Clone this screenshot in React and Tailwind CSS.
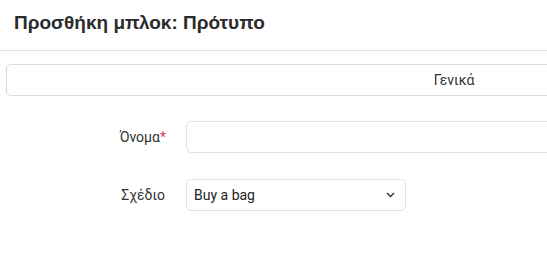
import React from 'react';

const App = () => {
  return (
    <div className="w-[547px] h-[279px] overflow-hidden bg-white text-[#212529] font-['Roboto',sans-serif]">
      <header className="h-[51px] border-b border-[#dee2ec] pl-[14px] pt-[11px]">
        <h1 className="text-[19px] leading-[24px] font-bold font-['Liberation_Sans',Arial,sans-serif] text-[#2b2b2b] whitespace-nowrap">
          Προσθήκη μπλοκ: Πρότυπο
        </h1>
      </header>
      <div className="pt-[13px] pl-[6px]">
        <div className="w-[896px] h-[32px] border border-[#d5dae6] rounded-[5px] flex items-center justify-center text-[14px] text-[#333]">
          Γενικά
        </div>
      </div>
      <form className="pt-[25px] text-[14px]">
        <div className="flex items-center h-[32px]">
          <label className="w-[166px] shrink-0 text-right text-[#333]">
            Όνομα<span className="text-[#e5395b]">*</span>
          </label>
          <input className="ml-[20px] shrink-0 w-[400px] h-[32px] border border-[#dee2ec] rounded-[5px] outline-none" />
        </div>
        <div className="flex items-center h-[32px] mt-[26px]">
          <label className="w-[165px] shrink-0 text-right text-[#333]">Σχέδιο</label>
          <div className="ml-[21px] shrink-0 w-[220px] h-[32px] border border-[#dee2ec] rounded-[5px] flex items-center justify-between pl-[7px] pr-[10px] text-[#222]">
            <span>Buy a bag</span>
            <svg width="9" height="6" viewBox="0 0 9 6" fill="none">
              <path d="M1 1l3.5 3.5L8 1" stroke="#333" strokeWidth="1.4" />
            </svg>
          </div>
        </div>
      </form>
    </div>
  );
};

export default App;
